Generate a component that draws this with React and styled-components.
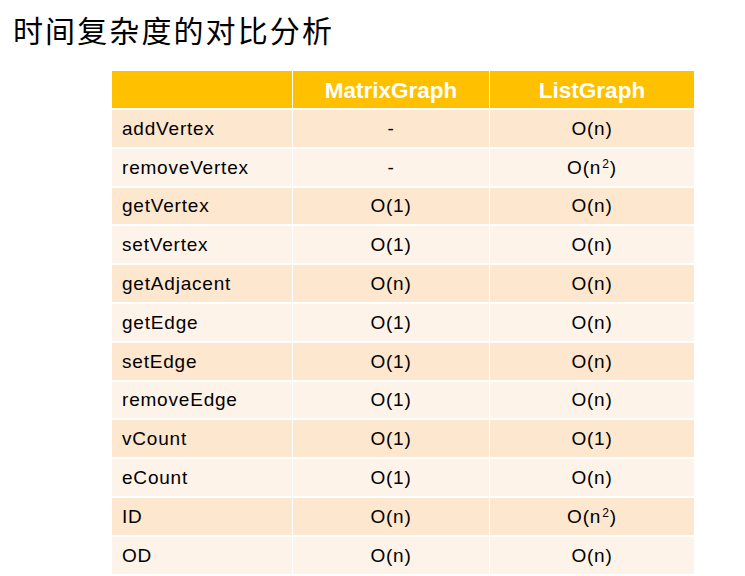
import React from 'react';
import styled, { createGlobalStyle } from 'styled-components';

const GlobalStyle = createGlobalStyle`
    html, body {
        margin: 0;
        padding: 0;
        background: #ffffff;
    }
`;

const Page = styled.div`
    width: 745px;
    height: 576px;
    overflow: hidden;
    background: #ffffff;
    display: flex;
    flex-direction: column;
`;

const Title = styled.h1`
    margin: 9px 0 0 13px;
    font-family: "Noto Sans CJK SC", "Noto Sans", sans-serif;
    font-weight: 400;
    font-size: 30px;
    line-height: 40px;
    letter-spacing: 2.1px;
    color: #000000;
`;

const Table = styled.div`
    margin: 22px 0 0 112px;
    display: grid;
    grid-template-columns: 180px 196px 204px;
    grid-template-rows: 37px;
    grid-auto-rows: 36.8px;
    column-gap: 1px;
    row-gap: 2px;
    width: 582px;
    background: #ffffff;
`;

const HeadCell = styled.div`
    background: #ffc000;
    color: #ffffff;
    font-family: "Liberation Sans", Arial, sans-serif;
    font-weight: 700;
    font-size: 22.5px;
    display: flex;
    align-items: center;
    justify-content: center;
    padding-top: 2px;
`;

const Cell = styled.div`
    background: ${p => (p.$odd ? '#fde7cf' : '#fef3e8')};
    color: #000000;
    font-family: "Liberation Sans", Arial, sans-serif;
    font-size: 19px;
    letter-spacing: 0.8px;
    display: flex;
    align-items: center;
    justify-content: ${p => (p.$left ? 'flex-start' : 'center')};
    padding-left: ${p => (p.$left ? '10px' : '0')};
    padding-top: 1px;
`;

const Sup = styled.span`
    font-size: 12px;
    letter-spacing: 0;
    position: relative;
    top: -6px;
    margin: 0 1px 0 1px;
`;

const rows = [
    ['addVertex', '-', 'O(n)'],
    ['removeVertex', '-', 'O(n2)'],
    ['getVertex', 'O(1)', 'O(n)'],
    ['setVertex', 'O(1)', 'O(n)'],
    ['getAdjacent', 'O(n)', 'O(n)'],
    ['getEdge', 'O(1)', 'O(n)'],
    ['setEdge', 'O(1)', 'O(n)'],
    ['removeEdge', 'O(1)', 'O(n)'],
    ['vCount', 'O(1)', 'O(1)'],
    ['eCount', 'O(1)', 'O(n)'],
    ['ID', 'O(n)', 'O(n2)'],
    ['OD', 'O(n)', 'O(n)'],
];

function Value({ text }) {
    if (text === 'O(n2)') {
        return <span>O(n<Sup>2</Sup>)</span>;
    }
    return <span>{text}</span>;
}

export default function App() {
    return (
        <Page>
            <GlobalStyle />
            <Title>时间复杂度的对比分析</Title>
            <Table>
                <HeadCell />
                <HeadCell>MatrixGraph</HeadCell>
                <HeadCell>ListGraph</HeadCell>
                {rows.map(([name, matrix, list], i) => (
                    <React.Fragment key={name}>
                        <Cell $odd={i % 2 === 0} $left>{name}</Cell>
                        <Cell $odd={i % 2 === 0}><Value text={matrix} /></Cell>
                        <Cell $odd={i % 2 === 0}><Value text={list} /></Cell>
                    </React.Fragment>
                ))}
            </Table>
        </Page>
    );
}
